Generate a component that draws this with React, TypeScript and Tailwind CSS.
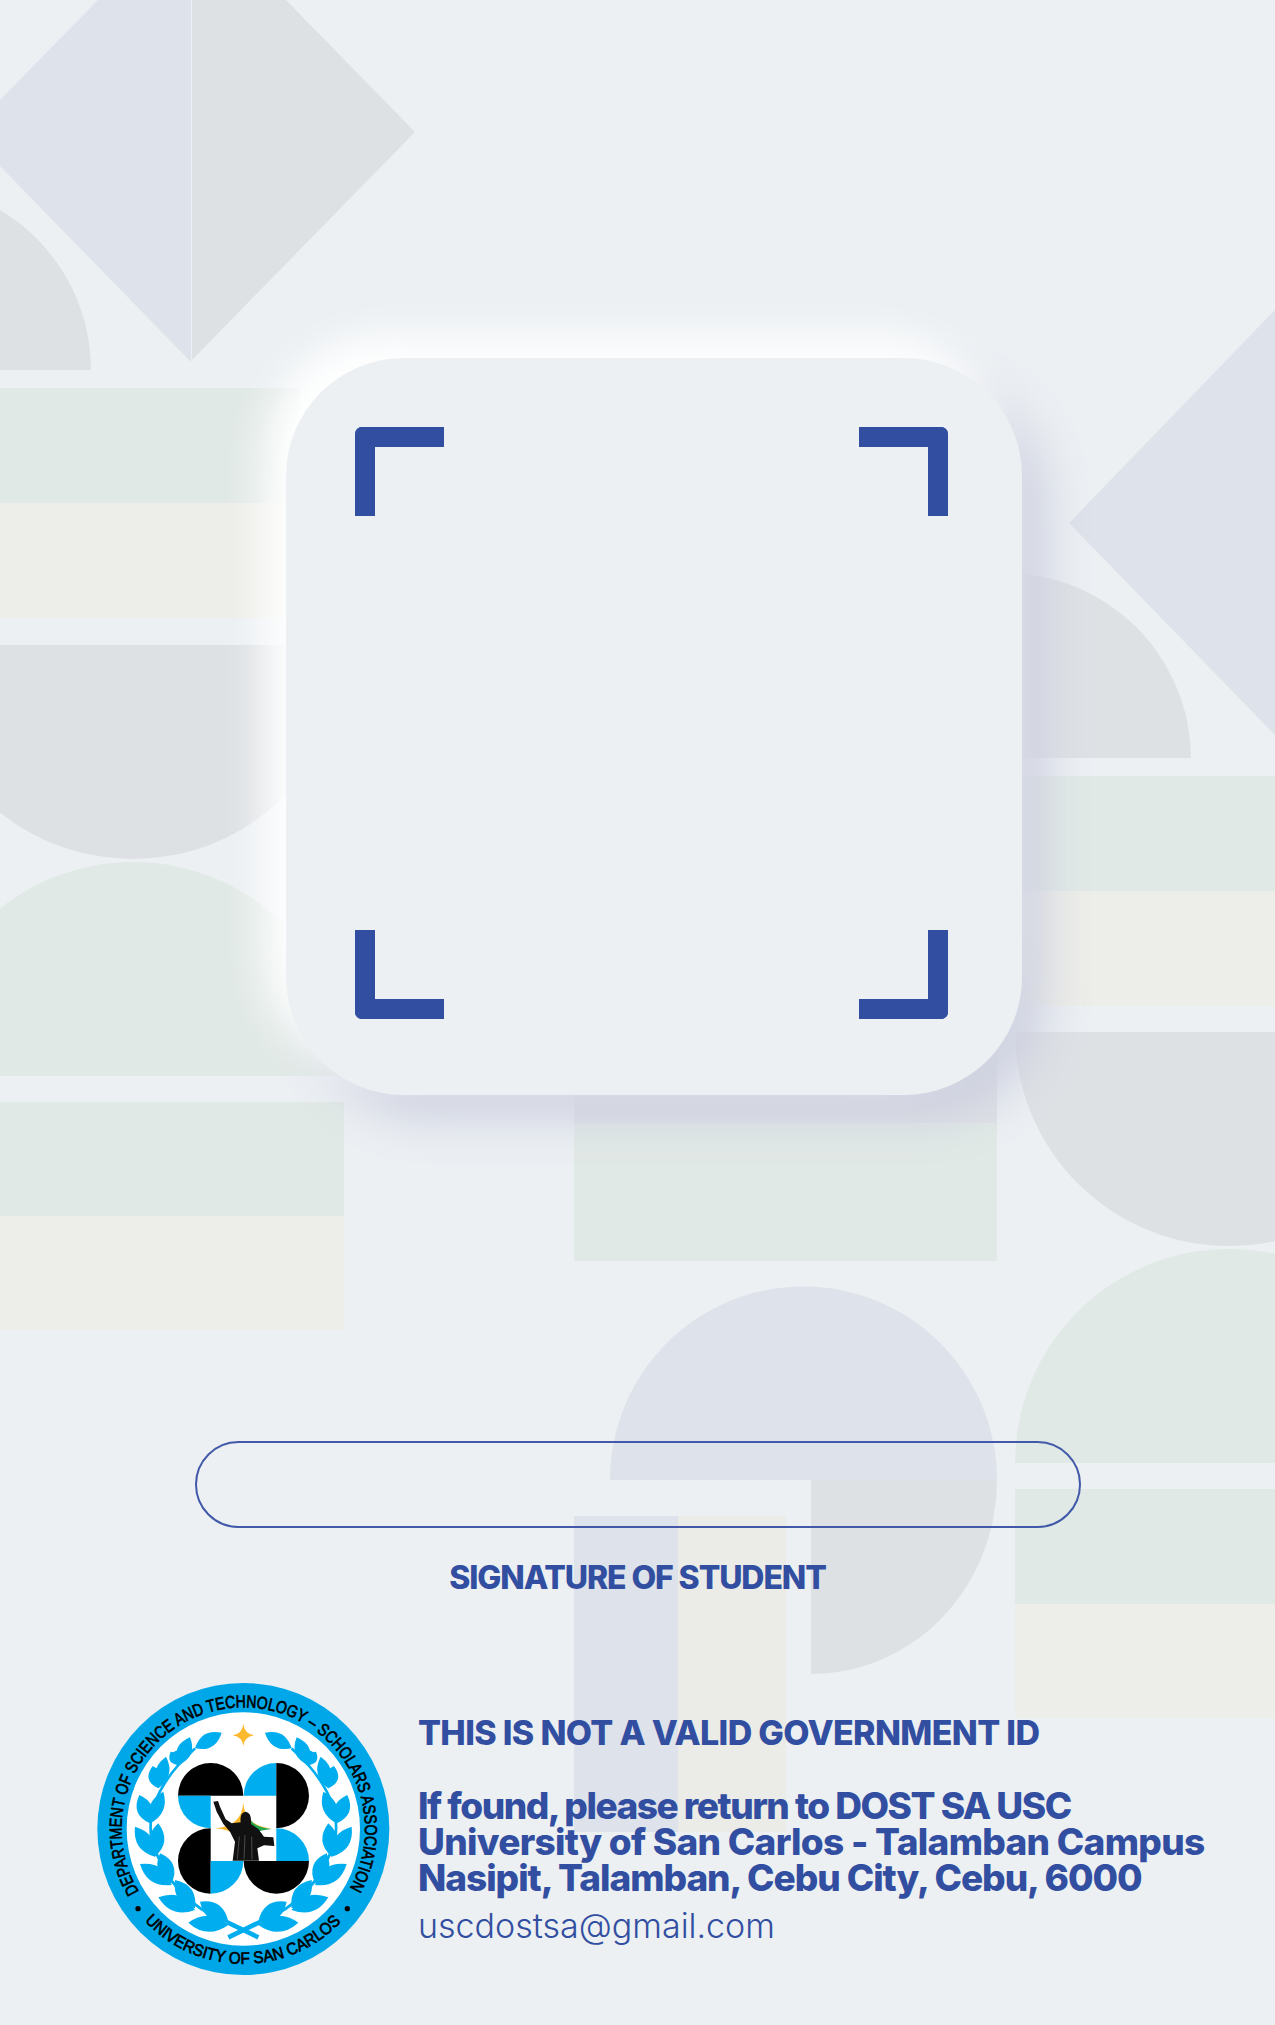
import React from 'react';

const LEAF = '#00aeef';

// left side of the laurel as [baseX, baseY, tipX, tipY, width], in the logo's own 960 box
const LEAVES: number[][] = [
  [445, 795, 325, 788, 48], [445, 785, 360, 725, 48],
  [345, 750, 235, 712, 48], [345, 745, 285, 660, 48],
  [275, 675, 180, 612, 48], [275, 670, 240, 580, 48],
  [225, 590, 165, 500, 46], [225, 590, 235, 490, 46],
  [210, 490, 178, 405, 46], [210, 490, 250, 395, 42],
  [235, 385, 218, 318, 42], [235, 385, 258, 290, 42],
  [295, 315, 272, 275, 30], [295, 315, 330, 232, 44],
  [345, 265, 425, 218, 42], [320, 290, 275, 280, 28],
];

const leafPath = ([bx, by, tx, ty, w]: number[]) => {
  const mx = (bx + tx) / 2;
  const my = (by + ty) / 2;
  const dx = tx - bx;
  const dy = ty - by;
  const len = Math.hypot(dx, dy);
  const nx = (-dy / len) * w;
  const ny = (dx / len) * w;
  return `M${bx} ${by}Q${mx + nx} ${my + ny} ${tx} ${ty}Q${mx - nx} ${my - ny} ${bx} ${by}Z`;
};

const Logo = () => (
  <svg viewBox="0 0 960 960" className="w-[320px] h-[320px] shrink-0">
    <defs>
      <path id="ring-top" d="M177 695A365 365 0 1 1 803 695" />
      <path id="ring-bottom" d="M194 783A405 405 0 0 0 786 783" />
    </defs>
    <circle cx="490" cy="507" r="438" fill="#00a7e8" />
    <circle cx="490" cy="507" r="350" fill="#ffffff" />
    <text fontFamily="'Liberation Sans', sans-serif" fontSize="52" fill="#000000" stroke="#000000" strokeWidth="2">
      <textPath href="#ring-top" textLength="1530" lengthAdjust="spacingAndGlyphs">DEPARTMENT OF SCIENCE AND TECHNOLOGY – SCHOLARS ASSOCIATION</textPath>
    </text>
    <text fontFamily="'Liberation Sans', sans-serif" fontSize="50" fill="#000000" stroke="#000000" strokeWidth="2">
      <textPath href="#ring-bottom" textLength="660" lengthAdjust="spacingAndGlyphs">UNIVERSITY OF SAN CARLOS</textPath>
    </text>
    <circle cx="174" cy="746" r="8" fill="#000000" />
    <circle cx="802" cy="746" r="8" fill="#000000" />

    {/* laurel */}
    <g fill={LEAF}>
      {LEAVES.map((l, i) => <path key={i} d={leafPath(l)} />)}
      <g transform="translate(980 0) scale(-1 1)">
        {LEAVES.map((l, i) => <path key={i} d={leafPath(l)} />)}
      </g>
    </g>
    <g fill="none" stroke={LEAF} strokeWidth="8">
      <path d="M535 832L440 786M445 832L540 786" strokeWidth="14" />
      <path d="M440 786Q270 720 215 540Q195 430 295 315L345 265" />
      <path d="M540 786Q710 720 765 540Q785 430 685 315L635 265" />
    </g>
    <path d="M490 192Q493 221 522 226Q493 231 490 258Q487 231 458 226Q487 221 490 192Z" fill="#fdb92e" />

    {/* seal */}
    <path d="M294 407A98 98 0 0 1 490 407Z" fill="#000000" />
    <path d="M294 407H392V505A98 98 0 0 1 294 407Z" fill={LEAF} />
    <path d="M491 407A98 98 0 0 1 589 309V407Z" fill={LEAF} />
    <path d="M589 309A98 98 0 0 1 589 505Z" fill="#000000" />
    <path d="M392 505A98 98 0 0 0 392 701Z" fill="#000000" />
    <path d="M392 603H490A98 98 0 0 1 392 701Z" fill={LEAF} />
    <path d="M589 505A98 98 0 0 1 687 603H589Z" fill={LEAF} />
    <path d="M491 603H687A98 98 0 0 1 491 603Z" fill="#000000" />
    <path d="M490 425Q493 498 575 505Q493 510 490 580Q487 510 405 505Q487 498 490 425Z" fill="#fdb92e" />
    <path d="M510 478Q522 502 575 507Q530 512 510 525Z" fill="#1fa54a" />
    <path d="M400 425L414 423L420 440L437 478L455 490L482 487Q478 458 497 455Q516 458 513 492L535 507L552 530L580 532L583 558L552 556L532 565L537 602H458L465 545L450 515L430 492L410 455Z" fill="#111111" />
    <path d="M478 530L472 598M495 525L492 598M515 530L516 598" stroke="#666666" strokeWidth="2" fill="none" />
  </svg>
);

const Background = () => (
  <svg viewBox="0 0 1275 2025" className="absolute inset-0 w-full h-full">
    {/* top left */}
    <path d="M98 0H191V362L0 166V100Z" fill="#dee2ea" />
    <path d="M192 0H286L415 132L192 360Z" fill="#dee1e4" />
    <path d="M0 210A186 186 0 0 1 91 370H0Z" fill="#dee1e4" />
    <rect x="0" y="388" width="300" height="115" fill="#e1e9e6" />
    <rect x="0" y="503" width="300" height="115" fill="#edeee9" />
    <path d="M0 645H347A214 214 0 0 1 -81 645Z" fill="#dee1e4" />
    <path d="M-81 1076A214 214 0 0 1 347 1076Z" fill="#e1e9e6" />
    <rect x="0" y="1102" width="344" height="114" fill="#e1e9e6" />
    <rect x="0" y="1216" width="344" height="114" fill="#edeee9" />

    {/* right */}
    <path d="M1275 310L1069 523L1275 735Z" fill="#dee2ea" />
    <path d="M1005 573A186 186 0 0 1 1191 758H1005Z" fill="#dee1e4" />
    <rect x="1015" y="776" width="260" height="115" fill="#e1e9e6" />
    <rect x="1015" y="891" width="260" height="115" fill="#edeee9" />
    <path d="M1015 1032H1443A214 214 0 0 1 1015 1032Z" fill="#dee1e4" />
    <path d="M1015 1463A214 214 0 0 1 1443 1463Z" fill="#e1e9e6" />
    <rect x="1015" y="1489" width="260" height="115" fill="#e1e9e6" />
    <rect x="1015" y="1604" width="260" height="114" fill="#edeee9" />

    {/* middle */}
    <rect x="574" y="1000" width="423" height="123" fill="#dee1e4" />
    <rect x="574" y="1123" width="423" height="138" fill="#e1e9e6" />
    <path d="M610 1480A193.5 193.5 0 0 1 997 1480Z" fill="#dee2ea" />
    <path d="M811 1480H997A186 194 0 0 1 811 1674Z" fill="#dee1e4" />
    <rect x="574" y="1516" width="104" height="316" fill="#dee2ea" />
    <rect x="678" y="1516" width="108" height="316" fill="#ebece7" />
  </svg>
);

const Corner = ({ className }: { className: string }) => (
  <div className={`w-[89px] h-[89px] border-[#324ea1] ${className}`} />
);

const App: React.FC = () => {
  return (
    <div className="relative w-[1275px] h-[2025px] overflow-hidden bg-[#ecf0f3] font-['Inter',sans-serif] text-[#324ea1]">
      <Background />
      <div className="relative flex flex-col pt-[358px]">
        {/* QR frame */}
        <div className="ml-[286px] w-[736px] h-[737px] rounded-[118px] bg-[#ecf0f3] pt-[69px] pl-[69px] pr-[74px] pb-[76px] flex flex-col justify-between shadow-[-22px_-22px_40px_#ffffff,24px_24px_48px_#ced1e0]">
          <div className="flex justify-between">
            <Corner className="border-t-[20px] border-l-[20px] rounded-tl-[7px]" />
            <Corner className="border-t-[20px] border-r-[20px] rounded-tr-[7px]" />
          </div>
          <div className="flex justify-between">
            <Corner className="border-b-[20px] border-l-[20px] rounded-bl-[7px]" />
            <Corner className="border-b-[20px] border-r-[20px] rounded-br-[7px]" />
          </div>
        </div>

        {/* signature */}
        <div className="ml-[195px] mt-[346px] w-[886px] h-[87px] rounded-[44px] border-2 border-[#4159a8]" />
        <div className="mt-[30px] w-[1275px] text-center text-[32px] leading-[40px] font-extrabold tracking-[-1.1px]">
          SIGNATURE OF STUDENT
        </div>

        {/* footer */}
        <div className="mt-[62px] ml-[80px] flex">
          <Logo />
          <div className="ml-[18px] pt-[53px]">
            <div className="text-[34px] leading-[40px] font-extrabold tracking-[-0.65px]">THIS IS NOT A VALID GOVERNMENT ID</div>
            <div className="mt-[35px] text-[37px] leading-[36px] font-extrabold">
              <div className="tracking-[-1.5px]">If found, please return to DOST SA USC</div>
              <div className="tracking-[-0.7px]">University of San Carlos - Talamban Campus</div>
              <div className="tracking-[-1.05px]">Nasipit, Talamban, Cebu City, Cebu, 6000</div>
            </div>
            <div className="mt-[8px] text-[34px] leading-[44px] font-light">uscdostsa@gmail.com</div>
          </div>
        </div>
      </div>
    </div>
  );
};

export default App;
